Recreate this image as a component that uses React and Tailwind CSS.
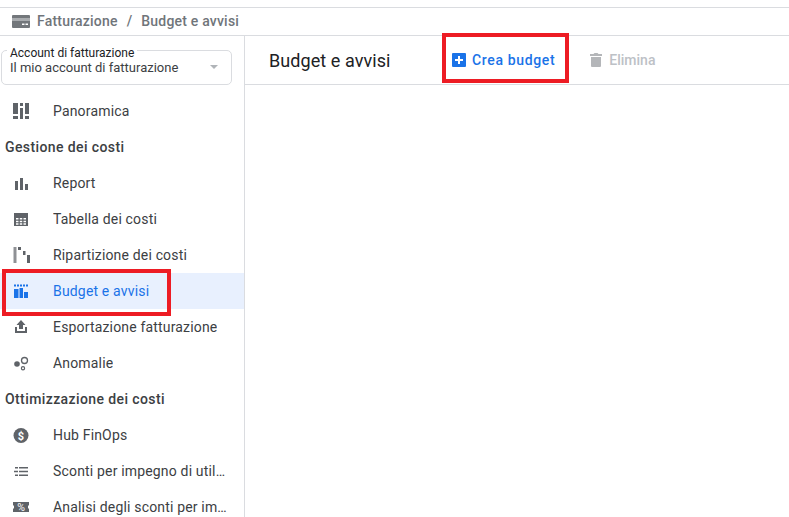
const G = "#5f6368";

const Icon = ({ children, color = G }) => (
  <svg width="18" height="18" viewBox="0 0 18 18" fill={color} className="shrink-0">{children}</svg>
);

const Panoramica = () => (
  <Icon>
    <path d="M1 1h5v11H1zM1 14h5v3H1zM8 1h3v3H8zM8 6h3v11H8zM13 1h4v11h-4zM13 14h4v3h-4z" />
  </Icon>
);
const Report = () => (
  <Icon>
    <path d="M3 7h3v9H3zM8 4h3v12H8zM13 10h3v6h-3z" />
  </Icon>
);
const Tabella = () => (
  <Icon>
    <path fillRule="evenodd" d="M2 3h14v13H2zM4 8v1.500h2.500V8zM7.750 8v1.500h2.500V8zM11.500 8v1.500H14V8zM4 10.750v1.500h2.500v-1.500zM7.750 10.750v1.500h2.500v-1.500zM11.500 10.750v1.500H14v-1.500zM4 13.250v1.500h2.500v-1.500zM7.750 13.250v1.500h2.500v-1.500zM11.500 13.250v1.500H14v-1.500z" />
  </Icon>
);
const Ripartizione = () => (
  <Icon>
    <path d="M1.500 1h3v16h-3z" opacity="0.7" />
    <path d="M6 1h3v3H6zM11 5h2.500v4H11zM15 9h3v8h-3z" />
  </Icon>
);
const Budget = ({ color }) => (
  <Icon color={color}>
    <path d="M2 2.500h2v2H2zM5 2.500h2v2H5zM8 2.500h2v2H8zM11 2.500h2v2h-2zM14 2.500h2v2h-2zM2 7h4.500v9H2zM7.500 6H11v10H7.500zM12 10h4v6h-4z" />
  </Icon>
);
const Esporta = () => (
  <Icon>
    <path d="M9 2l4.500 5H11v4H7V7H4.500zM3 9h2v4h8V9h2v6H3z" />
  </Icon>
);
const Anomalie = () => (
  <Icon>
    <circle cx="5" cy="10" r="2.800" />
    <circle cx="12.500" cy="6.500" r="3" fill="none" stroke={G} strokeWidth="1.300" />
    <circle cx="11" cy="14.200" r="1.600" fill="none" stroke={G} strokeWidth="1.200" />
  </Icon>
);
const Dollar = () => (
  <Icon>
    <circle cx="9" cy="9.500" r="7.500" />
    <text x="9" y="13.500" textAnchor="middle" fontSize="11" fontWeight="700" fill="#fff" fontFamily="Roboto, sans-serif">$</text>
  </Icon>
);
const Sconti = () => (
  <Icon>
    <path d="M7 5h9v1.500H7zM7 8.750h9v1.500H7zM7 12.500h9V14H7zM3 5h3v1.500H3zM2 8.750h4v1.500H2zM3 12.500h3V14H3z" />
  </Icon>
);
const Percent = () => (
  <Icon>
    <path d="M1 4h16v3.500h-1v3h1V14H1v-3.500h1v-3H1z" />
    <text x="9" y="13" textAnchor="middle" fontSize="10.500" fill="#fff" fontFamily="Roboto, sans-serif">%</text>
  </Icon>
);

const Item = ({ icon, label, active }) => (
  <div className={`h-9 flex items-center pl-3 pr-[17px] ${active ? "bg-[#e8f0fe]" : ""}`}>
    <div className="w-[41px] shrink-0 flex items-center">{icon}</div>
    <span className={`text-[14px] tracking-[0.17px] truncate ${active ? "text-[#1a73e8]" : "text-[#3c4043]"}`}>{label}</span>
  </div>
);

const Section = ({ children }) => (
  <div className="h-9 flex items-center pl-[5px] text-[14px] font-medium text-[#3c4043] tracking-[0.4px]">{children}</div>
);

export default function App() {
  return (
    <div className="relative w-[789px] h-[517px] overflow-hidden bg-white font-['Roboto',sans-serif]">
      <div className="h-[8px] border-b border-[#dadce0]" />
      <div className="h-[28px] flex items-center pl-3 border-b border-[#dadce0] text-[14px] font-medium text-[#70757a] tracking-[0.2px]">
        <svg width="18" height="13" viewBox="0 0 18 13" className="shrink-0 mr-[7px]">
          <rect width="18" height="13" rx="1" fill="#73777b" />
          <rect y="3" width="18" height="3" fill="#a9acaf" />
          <rect x="10" y="8.500" width="2.500" height="1.500" fill="#fff" />
          <rect x="13.500" y="8.500" width="2.500" height="1.500" fill="#fff" />
        </svg>
        <span>Fatturazione</span>
        <span className="mx-[9px]">/</span>
        <span>Budget e avvisi</span>
      </div>
      <div className="flex h-[481px]">
        <aside className="w-[245px] shrink-0 border-r border-[#dadce0] overflow-hidden">
          <div className="pt-[14px] pl-[1px] pr-3 pb-[8px]">
            <div className="relative h-[35px] w-[231px] border border-[#dadce0] rounded-[5px]">
              <span className="absolute left-[5px] top-[-5px] bg-white px-[3px] text-[12px] leading-[14px] text-[#202124]">Account di fatturazione</span>
              <span className="absolute left-[8px] top-[9px] text-[13px] leading-[16px] text-[#3c4043]">Il mio account di fatturazione</span>
              <span className="absolute right-[13px] top-[14px] w-0 h-0 border-x-[4px] border-x-transparent border-t-[4px] border-t-[#b0b4b8]" />
            </div>
          </div>
          <Item icon={<Panoramica />} label="Panoramica" />
          <Section>Gestione dei costi</Section>
          <Item icon={<Report />} label="Report" />
          <Item icon={<Tabella />} label="Tabella dei costi" />
          <Item icon={<Ripartizione />} label="Ripartizione dei costi" />
          <Item icon={<Budget color="#1a73e8" />} label="Budget e avvisi" active />
          <Item icon={<Esporta />} label="Esportazione fatturazione" />
          <Item icon={<Anomalie />} label="Anomalie" />
          <Section>Ottimizzazione dei costi</Section>
          <Item icon={<Dollar />} label="Hub FinOps" />
          <Item icon={<Sconti />} label="Sconti per impegno di utilizzo" />
          <Item icon={<Percent />} label="Analisi degli sconti per impegno" />
        </aside>
        <main className="flex-1 min-w-0">
          <div className="h-[49px] border-b border-[#dadce0] flex items-center pl-6">
            <h1 className="w-[183px] text-[18px] font-normal text-[#202124] tracking-[0.07px]">Budget e avvisi</h1>
            <button className="flex items-center text-[14px] font-medium text-[#1a73e8] tracking-[0.65px]">
              <svg width="14" height="14" viewBox="0 0 14 14" className="mr-[6px]">
                <rect width="14" height="14" rx="1" fill="#1a73e8" />
                <path d="M6 3h2v3h3v2H8v3H6V8H3V6h3z" fill="#fff" />
              </svg>
              Crea budget
            </button>
            <button className="ml-[35px] flex items-center text-[14px] font-medium text-[#bdc1c6]">
              <svg width="12" height="14" viewBox="0 0 12 14" className="mr-[7px]" fill="#b4b6b9">
                <path d="M1 4h10v9a1 1 0 0 1-1 1H2a1 1 0 0 1-1-1zM0 1h3.500l1-1h3l1 1H12v2H0z" />
              </svg>
              Elimina
            </button>
          </div>
        </main>
      </div>
      <div className="absolute left-[442px] top-[33px] w-[127px] h-[50px] border-[4px] border-[#ed1c24]" />
      <div className="absolute left-[2px] top-[269px] w-[169px] h-[47px] border-[4px] border-[#ed1c24]" />
    </div>
  );
}
